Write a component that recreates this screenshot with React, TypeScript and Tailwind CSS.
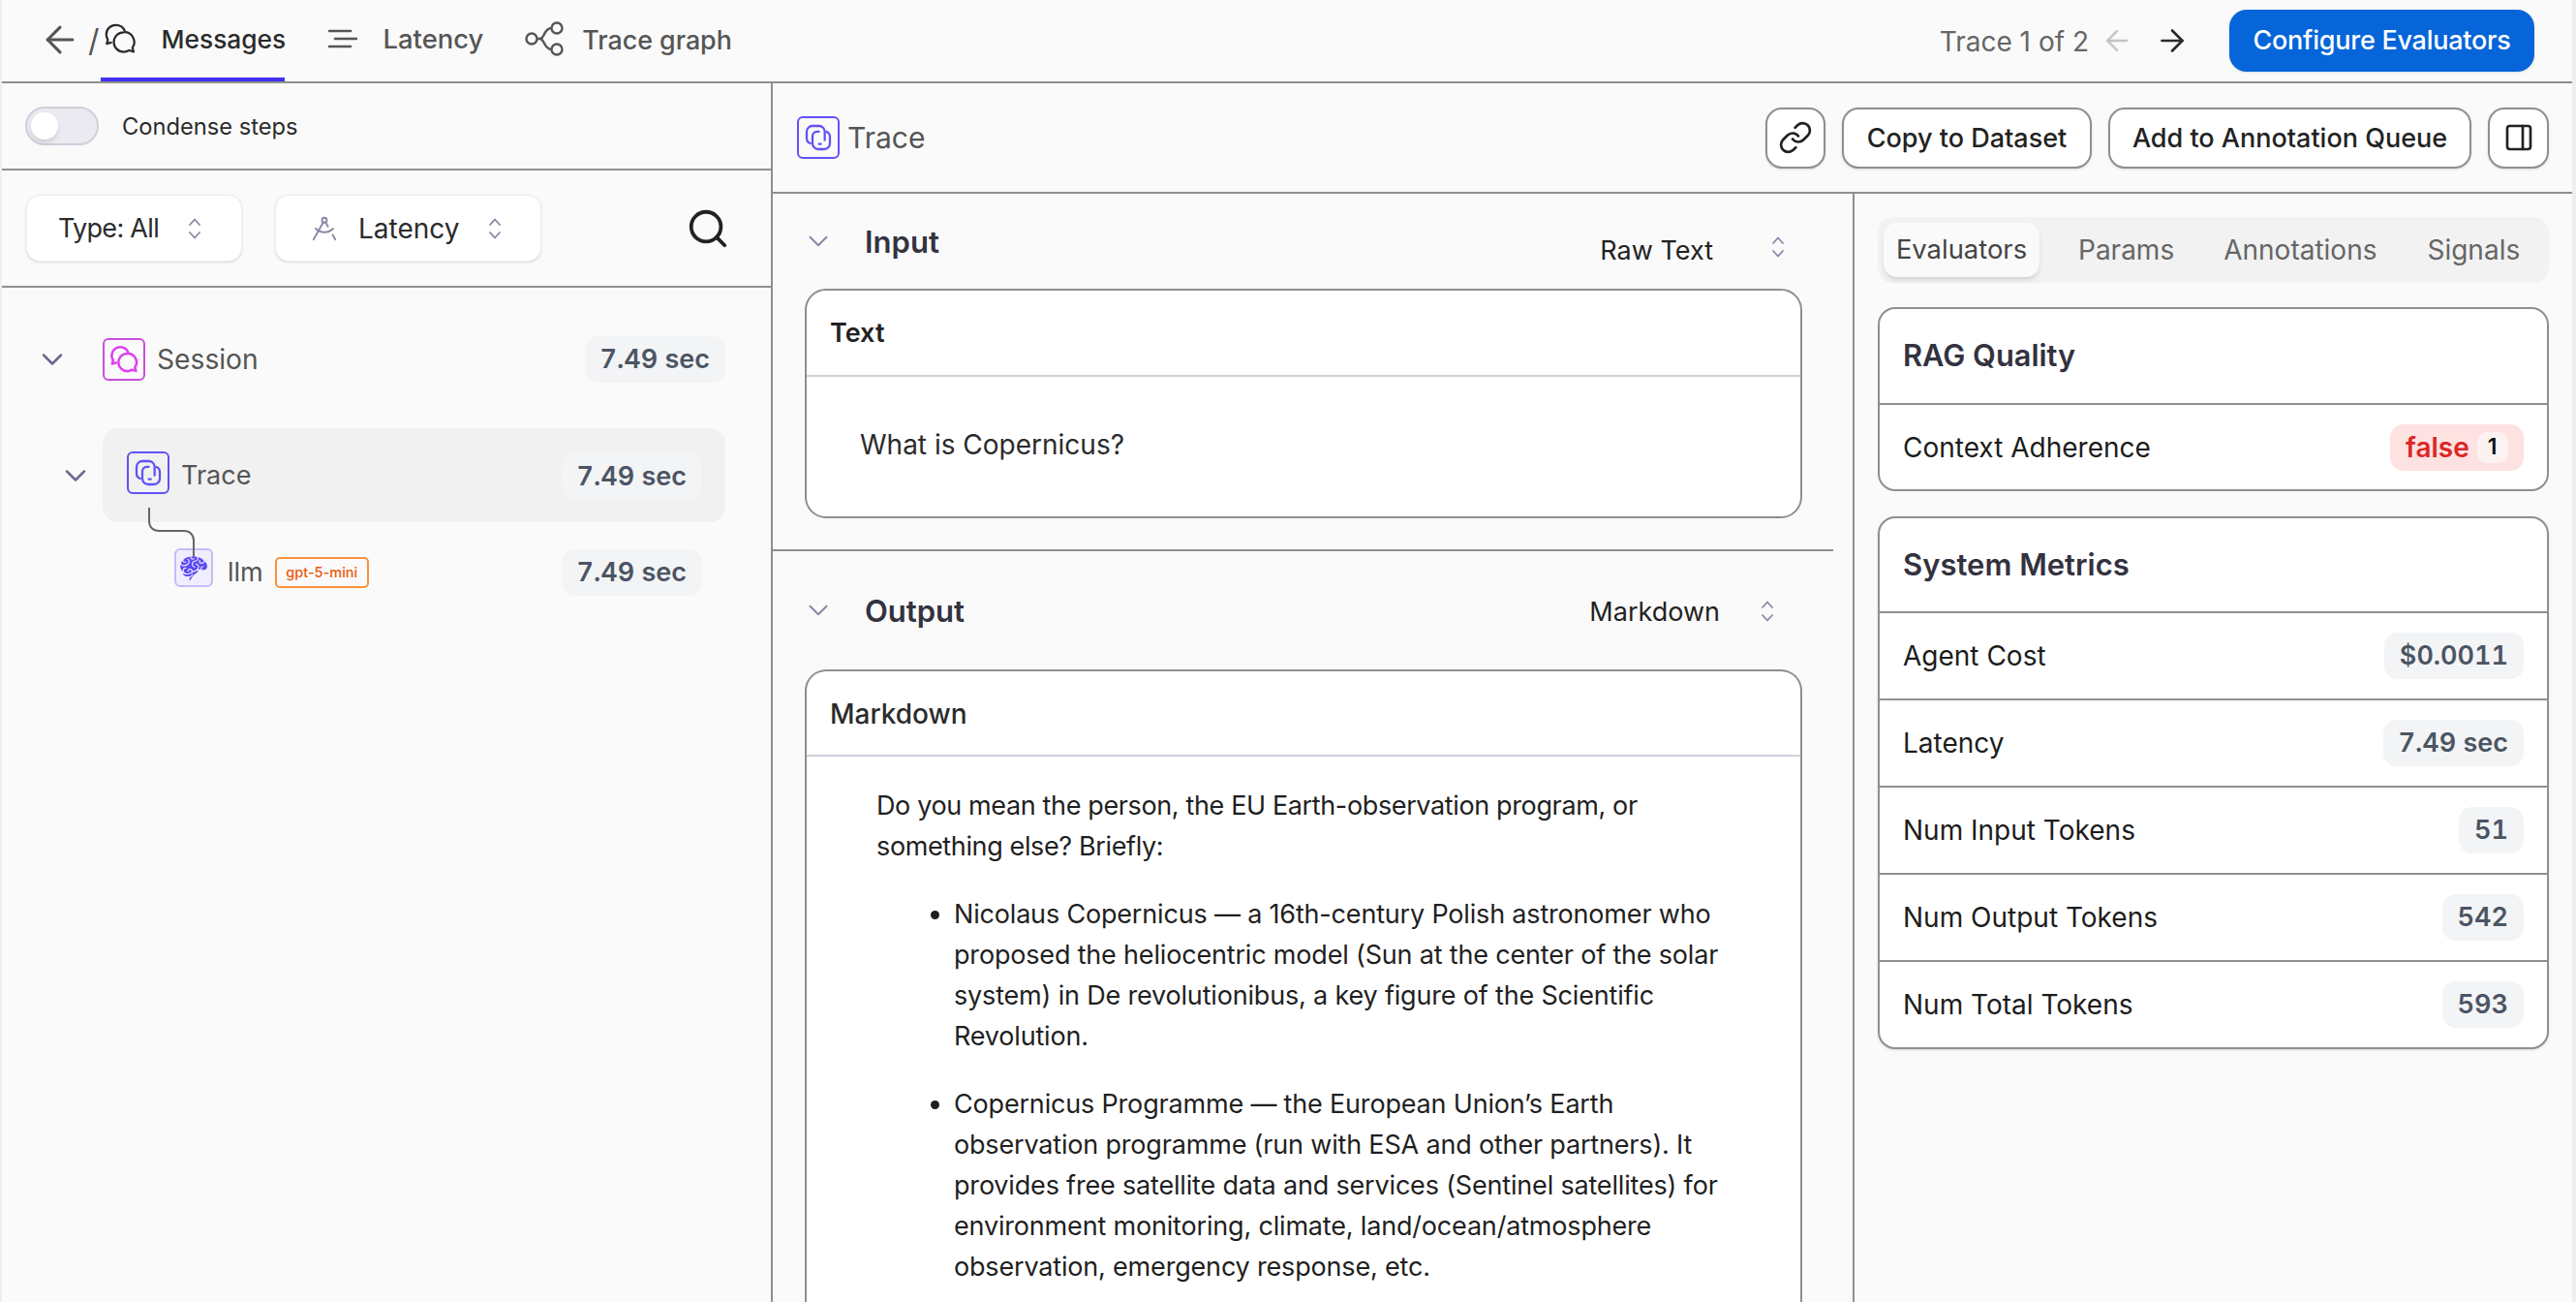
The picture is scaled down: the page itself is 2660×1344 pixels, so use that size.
import React from "react";
import { ArrowLeft, ArrowRight, ChevronDown, DraftingCompass, Link as LinkIcon, PanelRight, Search } from "lucide-react";
import { GiBrain } from "react-icons/gi";

function UpDown({ className = "" }: { className?: string }) {
  return (
    <svg viewBox="0 0 14 24" width="14" height="24" fill="none" stroke="currentColor" strokeWidth="1.8" strokeLinecap="round" strokeLinejoin="round" className={"shrink-0 text-[#8a87a6] " + className}>
      <path d="M2 8 7 2.5 12 8" />
      <path d="M2 16 7 21.5 12 16" />
    </svg>
  );
}

function MessagesIcon({ size, className = "", sw = 1.5 }: { size: number; className?: string; sw?: number }) {
  return (
    <svg viewBox="0 0 24 24" width={size} height={size} fill="none" stroke="currentColor" strokeWidth={sw} strokeLinecap="round" strokeLinejoin="round" className={"shrink-0 " + className}>
      <path d="M14.5 7.5a6.8 6.8 0 1 0 0 13.6c1.4 0 2.6-.4 3.7-1.1l3.1.9-.8-2.7a6.8 6.8 0 0 0-6-10.7z" />
      <path d="M15.2 6.6C14.3 4.2 12 2.5 9 2.5a6.5 6.5 0 0 0-6.5 6.5c0 1.4.4 2.6 1.1 3.7l-.8 2.7 3-.8" />
    </svg>
  );
}

function TraceIcon({ size }: { size: number }) {
  return (
    <svg viewBox="0 0 24 24" width={size} height={size} fill="none" stroke="currentColor" strokeWidth="1.7" strokeLinecap="round" strokeLinejoin="round" className="shrink-0">
      <path d="M5.8 16.5C4 15.8 3 14.4 3 12.5V7.5A4.5 4.5 0 0 1 7.5 3h5A4.5 4.5 0 0 1 17 7.5v6.5" />
      <path d="M7.5 11v5.5A4.5 4.5 0 0 0 12 21h4.5a4.5 4.5 0 0 0 4.5-4.5v-5c0-2-1-3.4-2.6-4" />
      <path d="M7.5 11c0-2 1.4-3.6 3.5-3.6h1.5" />
      <path d="M12.5 17H14" />
    </svg>
  );
}

function Pill({ children }: { children: React.ReactNode }) {
  return (
    <span className="inline-flex h-[48px] shrink-0 items-center rounded-[14px] bg-[#f3f4f6] px-[16px] text-[27px] font-semibold tabular-nums text-[#4b5563]">
      {children}
    </span>
  );
}

function MetricRow({ label, value, last }: { label: string; value: string; last?: boolean }) {
  return (
    <div className={"flex items-center justify-between pl-[24px] pr-[24px] " + (last ? "h-[88px]" : "h-[90px] border-b-2 border-[#8f8f8f]")}>
      <span className="text-[28px] text-[#1c1c1c]">{label}</span>
      <Pill>{value}</Pill>
    </div>
  );
}

function OutlineButton({ children, className = "" }: { children: React.ReactNode; className?: string }) {
  return (
    <button className={"flex h-[63px] items-center justify-center rounded-[17px] border-2 border-[#8f8f8f] bg-white text-[27px] font-medium text-[#222] shadow-sm " + className}>
      {children}
    </button>
  );
}

export default function App() {
  return (
    <div className="flex h-[1344px] w-[2660px] flex-col overflow-hidden border-l-2 border-r-4 border-[#efefef] bg-[#fafafa] font-['Inter',sans-serif] text-[27px]">
      {/* Top bar */}
      <header className="flex h-[86px] shrink-0 items-stretch border-b-2 border-[#8f8f8f]">
        <div className="flex items-center pl-[38px] text-[#555]">
          <ArrowLeft size={44} strokeWidth={1.7} className="-mt-[2px]" />
          <span className="ml-[7px] text-[32px] font-normal leading-none">/</span>
        </div>
        <div className="ml-[1px] flex w-[190px] items-center border-b-4 border-[#4131f0] pl-[2px] pt-[4px] text-[#2b2b2b]">
          <span className="-mt-[4px]"><MessagesIcon size={36} /></span>
          <span className="ml-[25px] -mt-[2px] text-[26.3px] font-medium">Messages</span>
        </div>
        <div className="ml-[45px] flex items-center text-[#555]">
          <svg viewBox="0 0 30 20" width="30" height="20" fill="none" stroke="currentColor" strokeWidth="2.6" strokeLinecap="round" className="-mt-[4px] shrink-0">
            <path d="M1 2h22" />
            <path d="M7 10h22" />
            <path d="M1 18h22" />
          </svg>
          <span className="ml-[27px] -mt-[2px] text-[27.4px] font-medium">Latency</span>
        </div>
        <div className="ml-[43px] flex items-center text-[#555]">
          <svg viewBox="0 0 40 36" width="40" height="36" fill="none" stroke="currentColor" strokeWidth="2.4" className="-mt-[4px] shrink-0">
            <circle cx="7" cy="18" r="5.5" />
            <circle cx="33" cy="7" r="5.5" />
            <circle cx="33" cy="29" r="5.5" />
            <path d="M12.5 18h3c5 0 4-11 12-11" />
            <path d="M15.5 18c5 0 4 11 12 11" />
          </svg>
          <span className="ml-[19px] -mt-[2px] text-[26.8px] font-medium">Trace graph</span>
        </div>
        <div className="ml-auto flex items-center pr-[39px]">
          <span className="mt-[1px] text-[28px] text-[#666]">Trace 1 of 2</span>
          <ArrowLeft size={34} strokeWidth={1.7} className="ml-[12px] text-[#c4c4c4]" />
          <ArrowRight size={36} strokeWidth={1.8} className="ml-[22px] text-[#2b2b2b]" />
          <button className="ml-[41px] flex h-[64px] w-[315px] items-center justify-center rounded-[18px] bg-[#0565d9] pt-[1px] text-[27px] font-medium tracking-[-0.25px] text-white shadow-sm">
            Configure Evaluators
          </button>
        </div>
      </header>

      <div className="flex min-h-0 flex-1">
        {/* Left panel */}
        <aside className="flex w-[796px] shrink-0 flex-col border-r-2 border-[#8f8f8f]">
          <div className="flex h-[90px] shrink-0 items-center border-b-2 border-[#8f8f8f] pl-[24px]">
            <div className="flex h-[40px] w-[76px] items-center rounded-full border-2 border-[#d0d0dc] bg-[#eaeaf0] pl-[4px]">
              <span className="h-[28px] w-[28px] rounded-full bg-white shadow-md" />
            </div>
            <span className="ml-[24px] mt-[2px] text-[23.7px] text-[#2b2b2b]">Condense steps</span>
          </div>
          <div className="flex h-[121px] shrink-0 items-center border-b-2 border-[#8f8f8f] pl-[25px] pr-[42px]">
            <div className="flex h-[69px] w-[223px] items-center rounded-[14px] border border-[#eeeeee] bg-white pl-[32px] shadow-sm">
              <span className="mt-[2px] tracking-[-0.7px] text-[#2b2b2b]">Type: All</span>
              <UpDown className="ml-[30px]" />
            </div>
            <div className="ml-[34px] flex h-[69px] w-[275px] items-center rounded-[14px] border border-[#eeeeee] bg-white pl-[35px] shadow-sm">
              <DraftingCompass size={30} strokeWidth={1.5} className="text-[#8a87a6]" />
              <span className="ml-[20px] text-[28px] text-[#2b2b2b]">Latency</span>
              <UpDown className="ml-[29px]" />
            </div>
            <Search size={46} strokeWidth={2} className="ml-auto text-[#222]" />
          </div>

          <div className="relative flex-1 pr-[47px]">
            <div className="mt-[50px] flex h-[48px] items-center pl-[34px]">
              <ChevronDown size={36} strokeWidth={1.7} className="text-[#6b6890]" />
              <span className="ml-[34px] flex h-[44px] w-[44px] items-center justify-center rounded-[6px] border-2 border-[#c94fdc] text-[#e040f0]">
                <MessagesIcon size={32} sw={1.9} />
              </span>
              <span className="ml-[12px] text-[28.2px] text-[#555]">Session</span>
              <span className="ml-auto"><Pill>7.49 sec</Pill></span>
            </div>

            <div className="mt-[47px] flex items-start pl-[58px]">
              <ChevronDown size={36} strokeWidth={1.7} className="mt-[31px] text-[#6b6890]" />
              <div className="ml-[10px] flex h-[97px] flex-1 items-start rounded-[16px] bg-[#f1f1f1] pl-[25px] pr-[24px] pt-[24px]">
                <span className="flex h-[44px] w-[44px] items-center justify-center rounded-[6px] border-2 border-[#6052f5] text-[#6052f5]">
                  <TraceIcon size={32} />
                </span>
                <span className="ml-[12px] mt-[5px] text-[#555]">Trace</span>
                <span className="ml-auto mt-[2px]"><Pill>7.49 sec</Pill></span>
              </div>
            </div>

            <svg viewBox="0 0 50 50" width="50" height="50" fill="none" stroke="#666" strokeWidth="2" className="absolute left-[150px] top-[227px]">
              <path d="M2 0v14c0 6 4 10 10 10h26c6 0 10 4 10 10v16" />
            </svg>

            <div className="mt-[28px] flex h-[48px] items-center pl-[178px] pr-[24px]">
              <span className="-mt-[10px] flex h-[40px] w-[40px] items-center justify-center rounded-[6px] border-2 border-[#c3bdfb] bg-[#f0eefd] text-[#5b49f5]">
                <GiBrain size={30} />
              </span>
              <span className="ml-[15px] text-[#555]">llm</span>
              <span className="ml-[12px] flex h-[32px] w-[97px] items-center justify-center rounded-[5px] border-2 border-[#fb923c] text-[14.5px] font-medium text-[#ea580c]">
                gpt-5-mini
              </span>
              <span className="ml-auto"><Pill>7.49 sec</Pill></span>
            </div>
          </div>
        </aside>

        {/* Main */}
        <main className="flex min-w-0 flex-1 flex-col">
          <div className="flex h-[114px] shrink-0 items-center border-b-2 border-[#8f8f8f] pl-[25px] pr-[24px]">
            <span className="flex h-[44px] w-[44px] items-center justify-center rounded-[6px] border-2 border-[#6052f5] text-[#6052f5]">
              <TraceIcon size={32} />
            </span>
            <span className="ml-[8px] text-[30px] text-[#555]">Trace</span>
            <div className="ml-auto flex items-center gap-[17px]">
              <OutlineButton className="w-[62px]"><LinkIcon size={36} strokeWidth={1.8} /></OutlineButton>
              <OutlineButton className="w-[258px] pt-[2px]">Copy to Dataset</OutlineButton>
              <OutlineButton className="w-[375px] pt-[2px]">Add to Annotation Queue</OutlineButton>
              <OutlineButton className="w-[63px]"><PanelRight size={32} strokeWidth={2} /></OutlineButton>
            </div>
          </div>

          <div className="flex min-h-0 flex-1">
            {/* Center */}
            <section className="w-[1115px] shrink-0 overflow-hidden pr-[20px]">
              <div className="border-b-2 border-[#8f8f8f] pb-[32px] pl-[33px] pr-[32px]">
                <div className="flex h-[98px] items-start">
                  <ChevronDown size={34} strokeWidth={1.4} className="-ml-[3px] mt-[32px] text-[#8a87a6]" />
                  <span className="ml-[31px] mt-[27px] text-[31px] font-semibold text-[#33323f]">Input</span>
                  <span className="ml-auto mt-[39px] text-[#222]">Raw Text</span>
                  <UpDown className="ml-[60px] mr-[18px] mt-[43px]" />
                </div>
                <div className="h-[237px] rounded-[22px] border-2 border-[#8f8f8f] bg-white">
                  <div className="flex h-[89px] items-center border-b-2 border-[#d0d0dc] pl-[24px] pt-[2px] text-[#222]">
                    <span className="font-semibold">Text</span>
                  </div>
                  <div className="pl-[55px] pt-[53px] text-[28px] leading-[34px] text-[#2b2b2b]">What is Copernicus?</div>
                </div>
              </div>

              <div className="pl-[33px] pr-[32px]">
                <div className="flex h-[122px] items-start">
                  <ChevronDown size={34} strokeWidth={1.4} className="-ml-[3px] mt-[44px] text-[#8a87a6]" />
                  <span className="ml-[31px] mt-[39px] text-[31px] font-semibold text-[#33323f]">Output</span>
                  <span className="ml-auto mt-[43px] text-[#222]">Markdown</span>
                  <UpDown className="ml-[42px] mr-[29px] mt-[50px]" />
                </div>
                <div className="rounded-t-[22px] border-x-2 border-t-2 border-[#8f8f8f] bg-white">
                  <div className="flex h-[88px] items-center border-b-2 border-[#d0d0dc] pl-[24px] pt-[2px] text-[28px] font-medium text-[#2b2b2b]">
                    Markdown
                  </div>
                  <div className="pb-[80px] pl-[72px] pr-[70px] pt-[30px] leading-[42px] text-[#1f1f1f]">
                    <p className="tracking-[-0.37px]">Do you mean the person, the EU Earth-observation program, or something else? Briefly:</p>
                    <ul className="mt-[28px] list-disc pl-[80px] tracking-[-0.18px]">
                      <li>Nicolaus Copernicus — a 16th-century Polish astronomer who proposed the heliocentric model (Sun at the center of the solar system) in De revolutionibus, a key figure of the Scientific Revolution.</li>
                      <li className="mt-[28px]">Copernicus Programme — the European Union’s Earth observation programme (run with ESA and other partners). It provides free satellite data and services (Sentinel satellites) for environment monitoring, climate, land/ocean/atmosphere observation, emergency response, etc.</li>
                    </ul>
                  </div>
                </div>
              </div>
            </section>

            {/* Right */}
            <section className="flex-1 border-l-2 border-[#8f8f8f] pl-[24px] pr-[24px] pt-[24px]">
              <div className="flex h-[68px] items-center rounded-[16px] bg-[#f2f2f2] pl-[6px] text-[28px] text-[#666]">
                <span className="flex h-[56px] w-[161px] items-center justify-center rounded-[14px] bg-[#fafafa] text-[27.4px] text-[#444] shadow-md">Evaluators</span>
                <span className="ml-[40px]">Params</span>
                <span className="ml-[51px]">Annotations</span>
                <span className="ml-[52px]">Signals</span>
              </div>

              <div className="mt-[25px] h-[190px] rounded-[18px] border-2 border-[#8f8f8f] bg-white">
                <div className="flex h-[99px] items-center border-b-2 border-[#8f8f8f] pl-[24px] text-[30.8px] font-semibold text-[#33323f]">RAG Quality</div>
                <div className="flex h-[87px] items-center justify-between pl-[24px] pr-[24px]">
                  <span className="text-[28px] text-[#1c1c1c]">Context Adherence</span>
                  <span className="flex h-[48px] w-[138px] items-center rounded-[14px] bg-[#fee2e2] pl-[16px] text-[28px] font-semibold text-[#dc2626]">
                    false
                    <span className="ml-[8px] flex h-[32px] w-[32px] items-center justify-center rounded-[10px] bg-[#fdf2f2] text-[23px] text-[#111]">1</span>
                  </span>
                </div>
              </div>

              <div className="mt-[26px] rounded-[18px] border-2 border-[#8f8f8f] bg-white shadow-sm">
                <div className="flex h-[98px] items-center border-b-2 border-[#8f8f8f] pl-[24px] text-[31px] font-semibold text-[#33323f]">System Metrics</div>
                <MetricRow label="Agent Cost" value="$0.0011" />
                <MetricRow label="Latency" value="7.49 sec" />
                <MetricRow label="Num Input Tokens" value="51" />
                <MetricRow label="Num Output Tokens" value="542" />
                <MetricRow label="Num Total Tokens" value="593" last />
              </div>
            </section>
          </div>
        </main>
      </div>
    </div>
  );
}
